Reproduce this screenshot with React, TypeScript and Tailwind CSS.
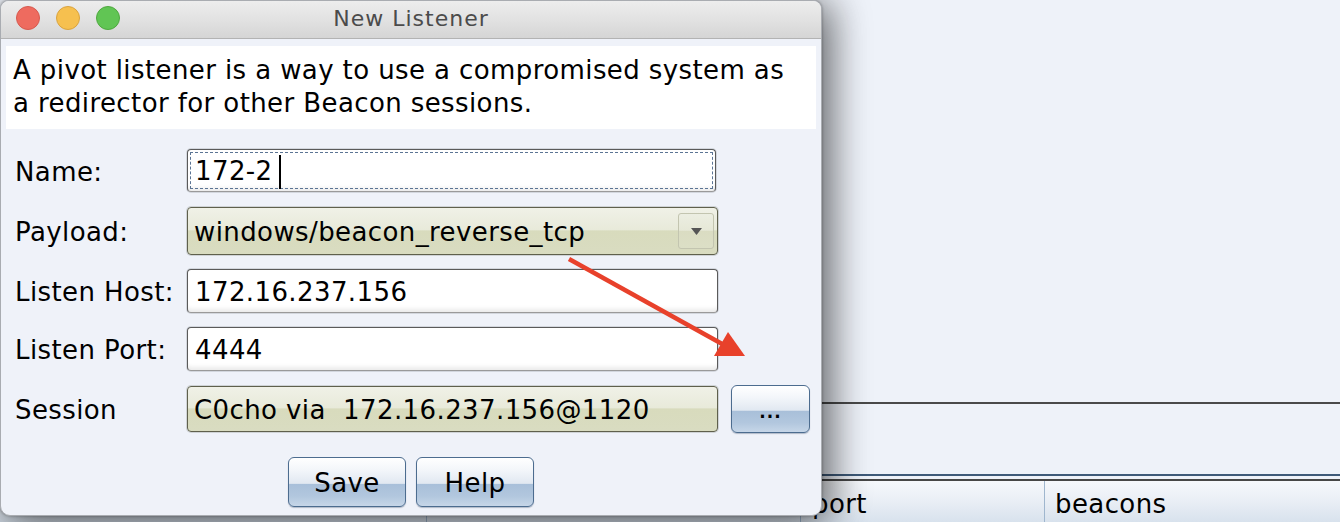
import React from "react";

type FieldProps = {
  value: string;
  focused?: boolean;
  className?: string;
};

const TextField = ({ value, focused, className = "w-[531px]" }: FieldProps) => {
  return (
    <div className={`h-full rounded-[4px] border border-[#5a5a5a] border-b-[#9a9a9a] bg-white p-[2px] shadow-[inset_0_-6px_4px_-3px_#ebebeb,0_0_0_1px_#d3d7de] ${className}`}>
      <div
        className={
          focused
            ? "flex h-full items-center border border-dashed border-[#5b7494] pl-[4px] pt-[2px]"
            : "flex h-full items-center pl-[5px] pt-[2px]"
        }
      >
        <span className="whitespace-pre">{value}</span>
        {focused && <span className="ml-[6px] h-[34px] w-[2px] bg-black" />}
      </div>
    </div>
  );
};

const Combo = ({ value, arrow }: { value: string; arrow?: boolean }) => {
  return (
    <div className="flex h-full w-[531px] items-center rounded-[4px] border border-[#5f604c] bg-[linear-gradient(to_bottom,#f0f1e7_0%,#e8eada_47%,#d8dbbd_50%,#d9dcc1_100%)] pl-[6px] pr-[3px] shadow-[0_0_0_1px_#cfd3d6]">
      <span className="flex-1 whitespace-pre pt-[2px]">{value}</span>
      {arrow && (
        <div className="flex h-[36px] w-[36px] items-center justify-center rounded-[3px] border border-[#c3c5b0] bg-[linear-gradient(to_bottom,#eceee2_0%,#e6e8d7_48%,#dadcc2_50%,#dcdfc6_100%)]">
          <svg width="11" height="7" viewBox="0 0 11 7">
            <polygon points="0,0 11,0 5.5,7" fill="#555" />
          </svg>
        </div>
      )}
    </div>
  );
};

const MacButton = ({ label, className }: { label: string; className: string }) => {
  return (
    <div
      className={`flex items-center justify-center rounded-[6px] border-[1.5px] border-[#4c6c8f] bg-[linear-gradient(to_bottom,#ffffff_0%,#f3f6fa_25%,#e1e8f1_53%,#a8bfd9_54%,#b2c7de_80%,#c6d6e8_100%)] shadow-[0_1px_1px_rgba(60,80,110,0.35)] ${className}`}
    >
      {label}
    </div>
  );
};

const FormRow = ({ label, children, className }: { label: string; children: React.ReactNode; className: string }) => {
  return (
    <div className={`flex items-center pl-[14px] ${className}`}>
      <div className="w-[172px] shrink-0 pt-[3px]">{label}</div>
      {children}
    </div>
  );
};

const BackgroundWindow = () => {
  return (
    <div className="flex h-full w-full flex-col">
      <div className="h-[402px]" />
      <div className="h-[2px] bg-[#4a4a4a]" />
      <div className="h-[70px]" />
      <div className="h-[2px] bg-[#3e5a79]" />
      <div className="h-[3px] bg-[#eef2f9]" />
      <div className="h-[2px] bg-[#474747]" />
      <div className="flex flex-1 bg-[linear-gradient(to_bottom,#f6f8fc_0%,#e9eef5_50%,#d8e2ed_100%)]">
        <div className="w-[426px] shrink-0" />
        <div className="w-[374px] shrink-0 border-l border-[#9fb6ce]" />
        <div className="w-[244px] shrink-0 border-l border-[#9fb6ce] pl-[11px] pt-[7px] leading-[33px]">port</div>
        <div className="flex-1 border-l border-[#9fb6ce] pl-[10px] pt-[7px] leading-[33px]">beacons</div>
      </div>
    </div>
  );
};

const ListenerDialog = () => {
  return (
    <div className="absolute left-0 top-0 flex h-[516px] w-[822px] flex-col overflow-hidden rounded-t-[9px] rounded-b-[10px] border border-[#a9acb1] bg-[#eff2f9] shadow-[0_10px_40px_rgba(0,0,0,0.45),14px_0_36px_rgba(0,0,0,0.3),0_0_3px_rgba(0,0,0,0.35)]">
      {/* title bar */}
      <div className="grid h-[38px] shrink-0 grid-cols-[1fr_auto_1fr] border-b border-[#b3b3b3] bg-[linear-gradient(to_bottom,#ededed_0%,#e2e2e2_50%,#d5d5d5_100%)]">
        <div className="flex gap-[16px] pl-[15px] pt-[5px]">
          <span className="h-[24px] w-[24px] rounded-full border border-[#d65a4f] bg-[#ee6b5f]" />
          <span className="h-[24px] w-[24px] rounded-full border border-[#d9a33f] bg-[#f6c04f]" />
          <span className="h-[24px] w-[24px] rounded-full border border-[#4fa83f] bg-[#61c554]" />
        </div>
        <div className="pt-[3px] text-[22px] leading-[30px] tracking-[1px] text-[#4b4b4b]">New Listener</div>
        <div />
      </div>

      {/* description */}
      <div className="mx-[5px] mt-[7px] h-[83px] bg-white px-[7px] pt-[8px] leading-[33px]">
        A pivot listener is a way to use a compromised system as
        <br />
        a redirector for other Beacon sessions.
      </div>

      {/* form */}
      <FormRow label="Name:" className="mt-[20px] h-[43px]">
        <TextField value="172-2" focused className="w-[529px]" />
      </FormRow>
      <FormRow label="Payload:" className="mt-[15px] h-[48px]">
        <Combo value="windows/beacon_reverse_tcp" arrow />
      </FormRow>
      <FormRow label="Listen Host:" className="mt-[14px] h-[44px]">
        <TextField value="172.16.237.156" />
      </FormRow>
      <FormRow label="Listen Port:" className="mt-[14px] h-[44px]">
        <TextField value="4444" />
      </FormRow>
      <FormRow label="Session" className="mt-[15px] h-[46px]">
        <Combo value="C0cho via  172.16.237.156@1120" />
        <MacButton label="..." className="ml-[13px] h-[48px] w-[79px] pt-[8px] text-[17px] font-bold tracking-[1px]" />
      </FormRow>

      {/* buttons */}
      <div className="mt-[25px] flex justify-center gap-[10px]">
        <MacButton label="Save" className="h-[50px] w-[118px] pt-[2px]" />
        <MacButton label="Help" className="h-[50px] w-[118px] pt-[2px]" />
      </div>
    </div>
  );
};

const Annotation = () => {
  return (
    <svg className="pointer-events-none absolute left-0 top-0" width="1340" height="522">
      <line x1="569" y1="259" x2="724" y2="345" stroke="#e8412b" strokeWidth="4.5" />
      <polygon points="728,332 714,356 745,356" fill="#e8412b" />
    </svg>
  );
};

export default function App() {
  return (
    <div className="relative h-[522px] w-[1340px] overflow-hidden bg-[#eef2f9] font-['DejaVu_Sans',sans-serif] text-[26px] tracking-[0.4px] text-black">
      <BackgroundWindow />
      <ListenerDialog />
      <Annotation />
    </div>
  );
}
